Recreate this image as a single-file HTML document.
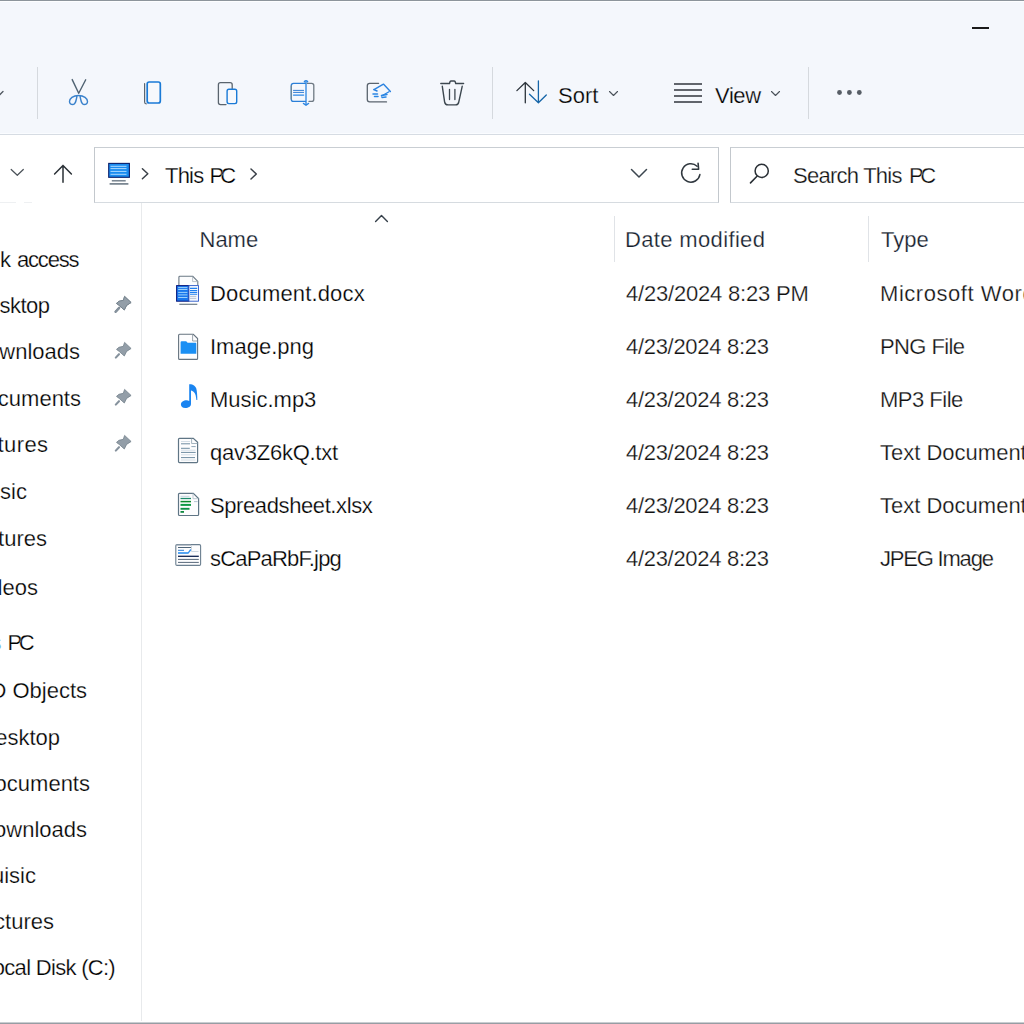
<!DOCTYPE html>
<html><head><meta charset="utf-8">
<style>
html,body{margin:0;padding:0;width:1024px;height:1024px;overflow:hidden;background:#fff;position:relative}
.t{position:absolute;font-family:"Liberation Sans",sans-serif;font-size:22px;line-height:22px;white-space:pre;color:#000;-webkit-text-stroke:0.25px #fff}
.tb{-webkit-text-stroke-color:#f4f7fc}
.g{color:#111}
.h{color:#14202c}
.r{text-align:right}
.abs{position:absolute}
svg{position:absolute;overflow:visible}
</style></head><body>
<!-- top frame line -->
<div class="abs" style="left:0;top:0;width:1024px;height:1px;background:#8d959c"></div>
<!-- toolbar background -->
<div class="abs" style="left:0;top:1px;width:1024px;height:133px;background:#f4f7fc"></div>
<div class="abs" style="left:0;top:1px;width:1024px;height:1px;background:#fdfeff"></div>
<div class="abs" style="left:0;top:133px;width:1024px;height:1px;background:#fafcff"></div>
<div class="abs" style="left:0;top:134px;width:1024px;height:1px;background:#d6dce3"></div>

<!-- minimize -->
<div class="abs" style="left:972px;top:27px;width:17px;height:2px;background:#1a1a1a"></div>

<!-- toolbar separators -->
<div class="abs" style="left:37px;top:67px;width:1px;height:52px;background:#d5d9de"></div>
<div class="abs" style="left:492px;top:67px;width:1px;height:52px;background:#d5d9de"></div>
<div class="abs" style="left:808px;top:67px;width:1px;height:52px;background:#d5d9de"></div>

<!-- Sort / View text -->
<div class="t tb" style="left:558px;top:85px">Sort</div>
<div class="t tb" style="left:715px;top:85px;letter-spacing:-0.4px">View</div>

<!-- address row -->
<div class="abs" style="left:94px;top:147px;width:623px;height:54px;border:1px solid #c3c8cd;border-bottom-color:#d6dbe0;border-top-color:#c9ced3;background:#fff"></div>
<div class="abs" style="left:730px;top:147px;width:400px;height:54px;border:1px solid #c3c8cd;border-bottom-color:#d6dbe0;border-top-color:#c9ced3;background:#fff"></div>
<div class="t" style="left:165px;top:165px;letter-spacing:-0.8px">This</div><div class="t" style="left:209.5px;top:165px;letter-spacing:-4px">PC</div>
<div class="t g" style="left:793px;top:165px;letter-spacing:-0.75px">Search This</div><div class="t g" style="left:909px;top:165px;letter-spacing:-3.5px">PC</div>

<div class="abs" style="left:0;top:202px;width:16px;height:1px;background:#eef0f2"></div><div class="abs" style="left:24px;top:202px;width:8px;height:1px;background:#eef0f2"></div>
<!-- sidebar border -->
<div class="abs" style="left:141px;top:203px;width:1px;height:818px;background:#e8eaec"></div>
<!-- bottom line -->
<div class="abs" style="left:0;top:1022px;width:1024px;height:1px;background:#c9cdd1"></div><div class="abs" style="left:0;top:1023px;width:1024px;height:1px;background:#979da3"></div>

<!-- sidebar texts (right-aligned at end x) -->
<div class="t r" style="right:calc(1024px - 11px);top:249px">Quick</div><div class="t" style="left:17px;top:249px;letter-spacing:-1.2px">access</div>
<div class="t r" style="right:calc(1024px - 49.5px);top:295px;letter-spacing:-0.5px">Desktop</div>
<div class="t r" style="right:calc(1024px - 80px);top:341px">Downloads</div>
<div class="t r" style="right:calc(1024px - 81px);top:388px">Documents</div>
<div class="t r" style="right:calc(1024px - 48.5px);top:434px;letter-spacing:0.4px">Pictures</div>
<div class="t r" style="right:calc(1024px - 27px);top:481px">Music</div>
<div class="t r" style="right:calc(1024px - 47px);top:528px">Pictures</div>
<div class="t r" style="right:calc(1024px - 38px);top:577px">Videos</div>
<div class="t r" style="right:calc(1024px - 1.5px);top:632px;color:#5aa0e0">This</div><div class="t" style="left:7.5px;top:632px;letter-spacing:-3.5px">PC</div>
<div class="t r" style="right:calc(1024px - 87px);top:680px">3D Objects</div>
<div class="t r" style="right:calc(1024px - 60px);top:727px">Desktop</div>
<div class="t r" style="right:calc(1024px - 90px);top:773px">Documents</div>
<div class="t r" style="right:calc(1024px - 87px);top:819px">Downloads</div>
<div class="t r" style="right:calc(1024px - 36px);top:865px">Muisic</div>
<div class="t r" style="right:calc(1024px - 54px);top:911px">Pictures</div>
<div class="t r" style="right:calc(1024px - 115px);top:957px;letter-spacing:-0.7px">Local Disk (C:)</div>

<!-- column headers -->
<div class="t h" style="left:199.5px;top:229px">Name</div>
<div class="t h" style="left:625px;top:229px;letter-spacing:0.35px">Date modified</div>
<div class="t h" style="left:881px;top:229px">Type</div>
<div class="abs" style="left:614px;top:216px;width:1px;height:46px;background:#e0e3e7"></div>
<div class="abs" style="left:868px;top:216px;width:1px;height:46px;background:#e0e3e7"></div>

<!-- rows -->
<div class="t" style="left:210px;top:283px;letter-spacing:0.15px">Document.docx</div>
<div class="t" style="left:210px;top:336px">Image.png</div>
<div class="t" style="left:210px;top:389px">Music.mp3</div>
<div class="t" style="left:210px;top:442px;letter-spacing:-0.25px">qav3Z6kQ.txt</div>
<div class="t" style="left:210px;top:495px;letter-spacing:-0.4px">Spreadsheet.xlsx</div>
<div class="t" style="left:210px;top:548px;letter-spacing:-0.8px">sCaPaRbF.jpg</div>

<div class="t g" style="left:626px;top:283px;letter-spacing:-0.2px">4/23/2024 8:23 PM</div>
<div class="t g" style="left:626px;top:336px;letter-spacing:-0.3px">4/23/2024 8:23</div>
<div class="t g" style="left:626px;top:389px;letter-spacing:-0.3px">4/23/2024 8:23</div>
<div class="t g" style="left:626px;top:442px;letter-spacing:-0.3px">4/23/2024 8:23</div>
<div class="t g" style="left:626px;top:495px;letter-spacing:-0.3px">4/23/2024 8:23</div>
<div class="t g" style="left:626px;top:548px;letter-spacing:-0.3px">4/23/2024 8:23</div>

<div class="t g" style="left:880px;top:283px;letter-spacing:0.55px">Microsoft Word Document</div>
<div class="t g" style="left:880px;top:336px;letter-spacing:-0.6px">PNG File</div>
<div class="t g" style="left:880px;top:389px;letter-spacing:-0.5px">MP3 File</div>
<div class="t g" style="left:880px;top:442px;letter-spacing:0px">Text Document</div>
<div class="t g" style="left:880px;top:495px;letter-spacing:0px">Text Document</div>
<div class="t g" style="left:880px;top:548px;letter-spacing:-1.2px">JPEG Image</div>

<!-- ICONS -->
<!-- left partial chevron -->
<svg width="1024" height="1024" style="left:0;top:0" viewBox="0 0 1024 1024">
<g fill="none" stroke-linecap="round" stroke-linejoin="round">
<path d="M-2 96.5 L3 91.5" stroke="#4f575f" stroke-width="1.3"/>
<!-- cut -->
<path d="M72.2 79.6 L78.7 93.3 L85.7 79.8" stroke="#4f6272" stroke-width="1.4"/>
<path d="M77 96 C76 101 75.5 104.5 73 104.5 C71 104.5 69.5 103.5 69.5 101.5 C69.5 98.5 73 95.5 78.5 95.5 C84 95.5 87.5 98.5 87.5 101.5 C87.5 103.5 86 104.5 84 104.5 C81.5 104.5 81 101 80 96" stroke="#3a82cc" stroke-width="1.4"/>
<!-- copy -->
<path d="M144.6 83.5 L144.6 102 Q144.6 103.8 146.3 103.8" stroke="#5a6570" stroke-width="1.2"/>
<rect x="147.2" y="82" width="13.1" height="21" rx="2" stroke="#1a7ad6" stroke-width="1.7" fill="#f6f8fc"/>
<!-- paste -->
<path d="M226 104.6 L220.5 104.6 Q218.4 104.6 218.4 102.5 L218.4 84.7 Q218.4 82.6 220.5 82.6 L230.1 82.6 Q232.2 82.6 232.2 84.7 L232.2 88.5" stroke="#5a646e" stroke-width="1.3"/>
<rect x="227.1" y="89.2" width="9.6" height="14.4" rx="1.8" stroke="#1a7ad6" stroke-width="1.4" fill="#f6f8fc"/>
<!-- rename -->
<path d="M305.5 83.3 L293.5 83.3 Q291.3 83.3 291.3 85.5 L291.3 99.2 Q291.3 101.4 293.5 101.4 L305.5 101.4" stroke="#2a7fd8" stroke-width="1.3"/>
<path d="M291.3 86 L291.3 99" stroke="#6f8796" stroke-width="1.3"/>
<path d="M307.2 83.3 L311.6 83.3 Q313.8 83.3 313.8 85.5 L313.8 99.2 Q313.8 101.4 311.6 101.4 L309 101.4" stroke="#6f7a84" stroke-width="1.3"/>
<path d="M306 82.5 L306 104" stroke="#2a84e0" stroke-width="1.3"/>
<path d="M304.5 81.6 Q306 80 307.5 81.6" stroke="#2a84e0" stroke-width="1.6"/>
<path d="M303.5 103.5 L306 105.2 L308.5 103.5" stroke="#2a84e0" stroke-width="1.5"/>
<path d="M293.5 90.4 L303.6 90.4 M293.5 92.4 L303.6 92.4" stroke="#1a6fd0" stroke-width="0.9"/>
<path d="M293.5 95.1 L303.6 95.1" stroke="#2a88e8" stroke-width="1.4"/>
<!-- share -->
<path d="M378.6 83.3 L369.7 83.3 Q367.3 83.3 367.3 85.7 L367.3 99.5 Q367.3 101.9 369.7 101.9 L386.5 101.9" stroke="#5a646e" stroke-width="1.3"/>
<path d="M374 89.6 L383.4 84.1 L390.4 91.4" stroke="#2a82e0" stroke-width="1.4"/>
<path d="M389 91.8 L381.5 96" stroke="#2a82e0" stroke-width="1.3"/>
<path d="M374 89.6 L377 91" stroke="#2a82e0" stroke-width="1.6"/>
<path d="M373 94 L377.5 94 M374.5 96.5 L378 96.5 M381.5 95.5 L387 94.5 M382 97.5 L386 97" stroke="#2a86e4" stroke-width="1.5"/>
<!-- delete -->
<path d="M440.8 83.5 L449.5 83.5 L450 81.8 Q450.3 81 451.2 81 L454 81 Q454.9 81 455.2 81.8 L455.7 83.5 L463.6 83.5" stroke="#3c474f" stroke-width="1.4"/>
<path d="M442.3 86.3 L444.6 101.8 Q445 104.8 448 104.9 L455.5 104.9 Q458.4 104.8 458.8 101.8 L462.2 86.3" stroke="#3c474f" stroke-width="1.4"/>
<path d="M449.5 89.3 L449.5 99.6 M454.9 89.3 L454.9 99.6" stroke="#3c474f" stroke-width="1.3"/>
<!-- sort -->
<path d="M525.3 82.5 L525.3 102.8 M516.9 90.6 L525.3 82.5 L533.7 90.6" stroke="#2b333b" stroke-width="1.3"/>
<path d="M538.4 81 L538.4 102.5 M529.5 94.2 L538.4 102.8 L546.3 95" stroke="#1565a8" stroke-width="1.3"/>
<path d="M609.5 91.5 L613.5 95.5 L617.5 91.5" stroke="#4a525a" stroke-width="1.1"/>
<!-- view -->
<path d="M674 84 L702 84 M674 90 L702 90 M674 96 L702 96 M674 102 L702 102" stroke="#30363c" stroke-width="1.5" stroke-linecap="butt"/>
<path d="M771.5 91.5 L775.5 95.5 L779.5 91.5" stroke="#4a525a" stroke-width="1.1"/>
<!-- back chevron / up arrow -->
<path d="M11.2 169.5 L17.3 175.3 L23.3 169.5" stroke="#4a5158" stroke-width="1.2"/>
<path d="M63 165.5 L63 182.3 M54.6 174 L63 165.5 L71.4 174" stroke="#2a3036" stroke-width="1.5"/>
<!-- address chevrons -->
<path d="M142.4 168.7 L147.8 173.7 L142.4 178.8" stroke="#3a4048" stroke-width="1.5"/>
<path d="M251 169 L256.3 174 L251 179" stroke="#3a4048" stroke-width="1.5"/>
<path d="M631.5 169.5 L639 177 L646.5 169.5" stroke="#3c464f" stroke-width="1.5"/>
<!-- refresh -->
<path d="M697.1 166.2 A9.2 9.2 0 1 0 699.9 174.6" stroke="#30383f" stroke-width="1.5"/>
<path d="M692.3 169.3 L698.6 169.3 L698.1 163.2" stroke="#30383f" stroke-width="1.6"/>
<!-- search -->
<circle cx="761.7" cy="170.9" r="6.6" stroke="#2a3036" stroke-width="1.5"/>
<path d="M757 176.3 L750.5 182.9" stroke="#2a3036" stroke-width="1.6"/>
<!-- header caret -->
<path d="M375.6 221.4 L381.5 215.4 L387.4 221.4" stroke="#36404a" stroke-width="1.4"/>
</g>
<!-- more dots -->
<g fill="#575e66"><circle cx="839.5" cy="92.5" r="2.4"/><circle cx="849.4" cy="92.5" r="2.4"/><circle cx="859.3" cy="92.5" r="2.4"/></g>
<!-- PC icon -->
<rect x="108.7" y="163.4" width="20.7" height="13.9" fill="#1a8cf0" stroke="#0b1f6a" stroke-width="1.1"/>
<path d="M110.5 166.3 L126.5 166.3 M110.5 168.6 L126.5 168.6 M110.5 171.4 L126.5 171.4 M110.5 174.3 L126.5 174.3" stroke="#bfe2ff" stroke-width="0.9"/>
<path d="M111.8 180.8 L125.7 180.8" stroke="#6c7a86" stroke-width="1.4"/>
<path d="M109.6 183.9 L128.4 183.9" stroke="#6c7a86" stroke-width="1.6"/>
<!-- pins -->
<g id="pin" fill="#8d99a3" stroke="#6b7884" stroke-width="0.8" stroke-linejoin="round">
<path d="M124.6 296.4 L131.1 302.5 L126.6 305.4 L124.3 310 L119.3 305.5 L116.5 303.4 L118.9 301.3 L123.3 300.3 Z"/>
<path d="M119.2 307.8 L115.6 311.8" stroke="#78848f" stroke-width="2.4" stroke-linecap="round"/>
</g>
</svg>
<svg width="1024" height="1024" style="left:0;top:0px" viewBox="0 0 1024 1024"><g fill="#939ea8" stroke="#74818c" stroke-width="0.8" stroke-linejoin="round"><path d="M124.6 296.4 L131.1 302.5 L126.6 305.4 L124.3 310 L119.3 305.5 L116.5 303.4 L118.9 301.3 L123.3 300.3 Z"/><path d="M119 308.2 L115.8 311.6" stroke="#86929d" stroke-width="2.1" stroke-linecap="round"/></g></svg>
<svg width="1024" height="1024" style="left:0;top:46.3px" viewBox="0 0 1024 1024"><g fill="#939ea8" stroke="#74818c" stroke-width="0.8" stroke-linejoin="round"><path d="M124.6 296.4 L131.1 302.5 L126.6 305.4 L124.3 310 L119.3 305.5 L116.5 303.4 L118.9 301.3 L123.3 300.3 Z"/><path d="M119 308.2 L115.8 311.6" stroke="#86929d" stroke-width="2.1" stroke-linecap="round"/></g></svg>
<svg width="1024" height="1024" style="left:0;top:93px" viewBox="0 0 1024 1024"><g fill="#939ea8" stroke="#74818c" stroke-width="0.8" stroke-linejoin="round"><path d="M124.6 296.4 L131.1 302.5 L126.6 305.4 L124.3 310 L119.3 305.5 L116.5 303.4 L118.9 301.3 L123.3 300.3 Z"/><path d="M119 308.2 L115.8 311.6" stroke="#86929d" stroke-width="2.1" stroke-linecap="round"/></g></svg>
<svg width="1024" height="1024" style="left:0;top:139.3px" viewBox="0 0 1024 1024"><g fill="#939ea8" stroke="#74818c" stroke-width="0.8" stroke-linejoin="round"><path d="M124.6 296.4 L131.1 302.5 L126.6 305.4 L124.3 310 L119.3 305.5 L116.5 303.4 L118.9 301.3 L123.3 300.3 Z"/><path d="M119 308.2 L115.8 311.6" stroke="#86929d" stroke-width="2.1" stroke-linecap="round"/></g></svg>
<!-- FILEICONS -->
<svg width="1024" height="1024" style="left:0;top:0" viewBox="0 0 1024 1024">
<!-- Word doc -->
<path d="M178.9 285 L178.9 277.2 Q178.9 276.3 179.8 276.3 L192.8 276.3 L197.8 281.4 L197.8 285" fill="#fbfcfd" stroke="#6a7884" stroke-width="1.1"/>
<path d="M192.6 276.6 L192.6 281.6 L197.6 281.6" fill="none" stroke="#a9b4bd" stroke-width="0.8"/>
<path d="M179.3 304.3 L197.3 304.3" stroke="#6d7c88" stroke-width="1.2"/>
<rect x="176.6" y="285.6" width="12.3" height="15.6" fill="#1a78ee" stroke="#06157a" stroke-width="1"/>
<rect x="188.9" y="285.6" width="9.6" height="15.6" fill="#f4f8fe" stroke="#2c58c8" stroke-width="0.9"/>
<path d="M178.2 287.6 L187.4 287.6 M178.2 289.5 L187.4 289.5 M178.2 292.4 L187.4 292.4 M178.2 294.9 L187.4 294.9 M178.2 297.5 L187.4 297.5" stroke="#bfe8ff" stroke-width="0.8"/>
<path d="M190 288.4 L197.2 288.4 M190 290.5 L197.2 290.5 M190 292.4 L197.2 292.4 M190 294.3 L197.2 294.3" stroke="#1f80f0" stroke-width="1.1"/>
<path d="M190 296.4 L196.3 296.4 M190 298.4 L196.3 298.4" stroke="#a8b8c8" stroke-width="0.8"/>
<!-- Image png -->
<path d="M178.6 335.3 Q178.6 334.3 179.6 334.3 L193.3 334.3 L197.6 338.6 L197.6 358.4 Q197.6 359.4 196.6 359.4 L179.6 359.4 Q178.6 359.4 178.6 358.4 Z" fill="#fdfdfe" stroke="#66737f" stroke-width="1.1"/>
<path d="M192.6 334.6 L192.6 341 L197.4 341" fill="none" stroke="#8e9aa4" stroke-width="0.9"/>
<path d="M180.6 342.3 Q180.6 341.3 181.6 341.3 L186.2 341.3 L187.6 342.8 L195.6 342.8 Q196.3 342.8 196.3 343.5 L196.3 353.8 L180.6 353.8 Z" fill="#1a8ff4"/>
<!-- Music -->
<path d="M189.2 384.2 L191 384.2 C193.5 384.8 195.6 386.3 196.3 388.5 C197 391 197.4 396 197.3 400 L196.4 400 C196 396.3 195.5 393.5 194.2 392.4 C193.3 391.5 192.2 390.8 191 390.6 L191 404 C191 406.4 188.5 408 185.3 408 C182.4 408 180.9 406.5 180.9 404.6 C180.9 402.1 183.6 400.3 186.6 400.3 C187.7 400.3 188.5 400.5 189.2 400.9 Z" fill="#1a84f0"/>
<!-- Txt -->
<path d="M178.5 439.3 Q178.5 438.3 179.5 438.3 L193.3 438.3 L197.6 442.3 L197.6 461.6 Q197.6 462.6 196.6 462.6 L179.5 462.6 Q178.5 462.6 178.5 461.6 Z" fill="#fdfdfe" stroke="#5f7585" stroke-width="1.2"/>
<path d="M191.6 438.6 L191.6 443.5 L197.4 443.5" fill="none" stroke="#9aabb8" stroke-width="0.9"/>
<path d="M181 443.8 L190 443.8 M181 448.3 L189.8 448.3 M181 452.4 L195.7 452.4 M181 457.6 L195 457.6" stroke="#6f8ca2" stroke-width="1"/>
<path d="M191.4 446.6 L195.7 446.6" stroke="#8fa5b6" stroke-width="1"/>
<path d="M181 441.5 L190 441.5 M181 454.8 L195.7 454.8 M181 450.2 L195.5 450.2 M181 460 L195.5 460" stroke="#c9d6e0" stroke-width="0.8"/>
<!-- Spreadsheet -->
<path d="M178.5 494.3 Q178.5 493.3 179.5 493.3 L193.3 493.3 L198.6 498.6 L198.6 514.5 Q198.6 515.5 197.6 515.5 L179.5 515.5 Q178.5 515.5 178.5 514.5 Z" fill="#fdfdfe" stroke="#5f7585" stroke-width="1.2"/>
<path d="M193 493.6 L193 498.7 L198.3 498.7" fill="none" stroke="#b7c4ce" stroke-width="0.9"/>
<path d="M180.5 496.3 L189.5 496.3" stroke="#b8c8d8" stroke-width="0.8"/>
<path d="M180.5 498.5 L191 498.5" stroke="#1c8a6a" stroke-width="1.3"/>
<path d="M180.5 501.6 L191 501.6" stroke="#0b8a2a" stroke-width="1.5"/>
<path d="M180.5 504.9 L191 504.9" stroke="#0f9a45" stroke-width="2"/>
<path d="M180.5 508.8 L189.5 508.8" stroke="#0f9045" stroke-width="1.9"/>
<path d="M180.5 511.9 L184 511.9" stroke="#0f8a40" stroke-width="1.8"/>
<path d="M194 501.6 L197.6 501.6" stroke="#a0b4c6" stroke-width="0.8"/>
<!-- JPG -->
<rect x="175.8" y="544.6" width="24.8" height="20.8" rx="1.2" fill="#fdfdfe" stroke="#6b7f90" stroke-width="1.1"/>
<path d="M176 545 L191 545" stroke="#9aa8b4" stroke-width="1"/>
<path d="M178 547.5 L191 547.5" stroke="#4e6478" stroke-width="1"/>
<path d="M178 550.3 L184 550.3" stroke="#2a7fd8" stroke-width="1"/>
<path d="M178 553 L188.6 553" stroke="#2a8ef0" stroke-width="1.6"/>
<path d="M188.3 552.8 L190.8 549.5" stroke="#2a8ef0" stroke-width="1.3"/>
<path d="M178 556.3 L198.8 556.3" stroke="#0e2250" stroke-width="1.3"/>
<path d="M178 559.4 L198.8 559.4 M178 562.4 L198.8 562.4" stroke="#58687a" stroke-width="1"/>
<path d="M191.5 545.5 L191.5 551.5 L198.5 551.5" fill="none" stroke="#c3ced8" stroke-width="0.8"/>
</svg>

</body></html>
